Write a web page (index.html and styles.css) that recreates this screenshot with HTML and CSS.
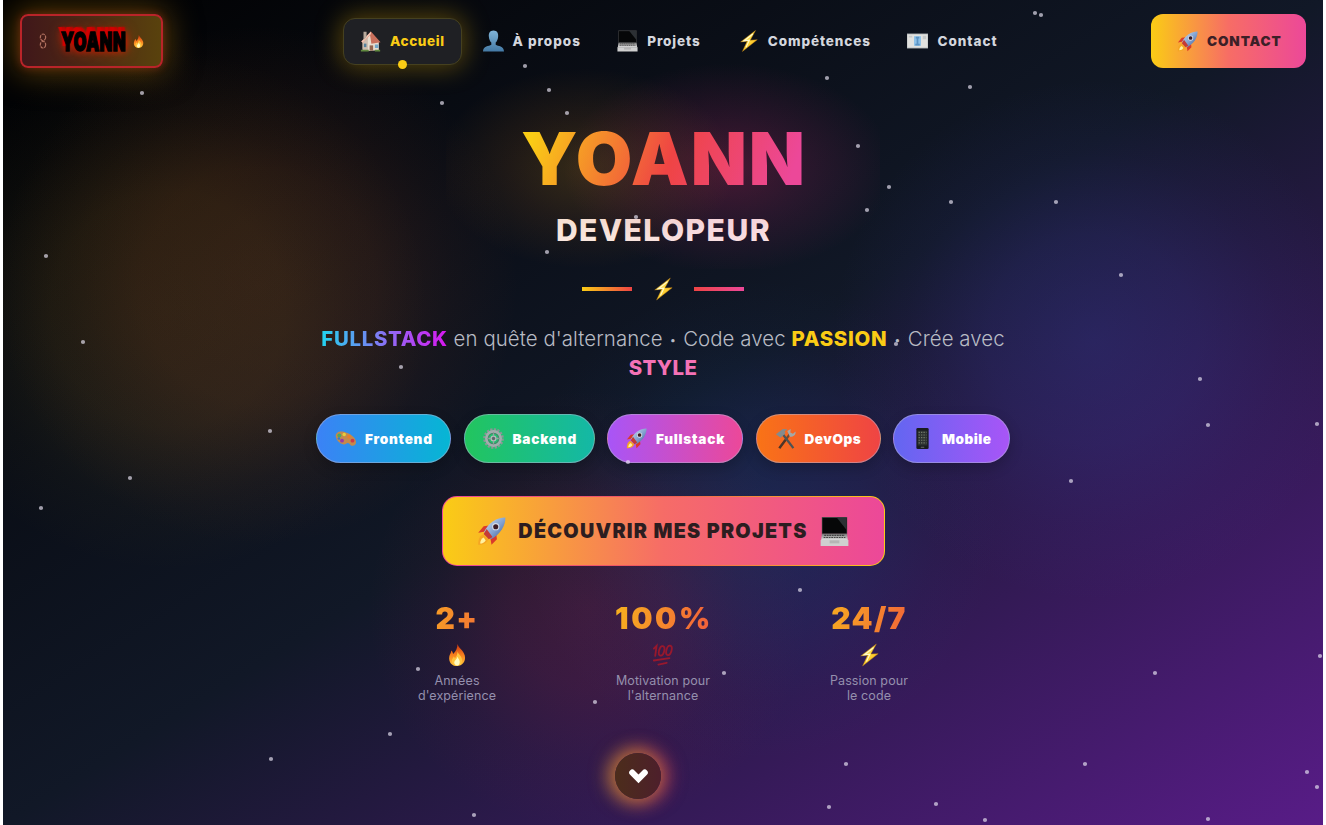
FILE: index.html
```html
<!DOCTYPE html>
<html lang="fr">
<head>
<meta charset="utf-8">
<title>Yoann – Développeur</title>
<link rel="stylesheet" href="styles.css">
</head>
<body>
<svg class="defs" aria-hidden="true">
  <defs>
    <linearGradient id="boltg" x1="0" y1="0" x2="1" y2="1"><stop offset="0" stop-color="#fff6a0"/><stop offset=".5" stop-color="#ffd93b"/><stop offset="1" stop-color="#f5a30a"/></linearGradient>
    <linearGradient id="flameg" x1="0" y1="0" x2="0" y2="1"><stop offset="0" stop-color="#c9300f"/><stop offset=".5" stop-color="#f7801e"/><stop offset="1" stop-color="#ffc83a"/></linearGradient>
    <linearGradient id="bust" x1="0" y1="0" x2="0" y2="1"><stop offset="0" stop-color="#80b4d8"/><stop offset="1" stop-color="#447aa6"/></linearGradient>
    <linearGradient id="hull" x1="0" y1="0" x2="1" y2="1"><stop offset="0" stop-color="#d5e4f5"/><stop offset=".55" stop-color="#7f9fce"/><stop offset="1" stop-color="#3c5487"/></linearGradient>
    <linearGradient id="key" x1="0" y1="0" x2="0" y2="1"><stop offset="0" stop-color="#777"/><stop offset="1" stop-color="#dedede"/></linearGradient>
    <symbol id="rocket" viewBox="0 0 24 24">
      <path d="M10 7 5.500 7.700 1 13l6-1zM16 14.500l.5 4L12 23l-1-6z" fill="#d93a2b"/>
      <path d="M5 14.500C1.500 16 1 19.500 1 23c3.500 0 7-.8 8.500-4.500z" fill="#f5a623"/>
      <path d="M5.500 17C3.500 18 2.700 20 2.600 22c2 0 3.600-1 4.600-2.600z" fill="#fff1a0"/>
      <path d="M23.500.5C17 .3 9.500 4.500 5.800 12.500l5.600 6C19.500 14.500 23.700 7 23.500.5z" fill="url(#hull)"/>
      <path d="M8 10 5.500 14l4.300 4.500 3-2z" fill="#c53a36"/>
      <circle cx="15.500" cy="8" r="3" fill="#d8dde8"/><circle cx="15.500" cy="8" r="2.100" fill="#3c1c25"/>
    </symbol>
    <symbol id="laptop" viewBox="0 0 24 24">
      <path d="M1.500 0h21v14h-21z" fill="#4c4c4c"/><path d="M2 .7h20v12.800H2z" fill="#060708"/>
      <path d="M14 .7h8v10z" fill="#2c3034"/>
      <path d="M1.500 14h21l.5 5H1z" fill="url(#key)"/><path d="M3.500 15.200h17M3 17h18" stroke="#444" stroke-width=".9" stroke-dasharray="1.500 .6"/>
      <path d="M.5 19h23v5H.5z" fill="#cfcfcf"/><path d="M8 19.300h8v2.500H8z" fill="#b5b5b5"/>
    </symbol>
    <symbol id="bolt" viewBox="0 0 24 24"><path d="M20 0 3 13l7.500-.7L5 24l17-13.500-8 .5z" fill="url(#boltg)" stroke="#b97a10" stroke-width=".5"/><path d="M17 4 7 11.700l6-.6-3.800 8" fill="none" stroke="#fffbd0" stroke-width="1.200"/></symbol>
    <symbol id="fire" viewBox="0 0 24 24">
      <path d="M12.500 0c1 4 6.500 7 8 12.500C22 19 17.500 24 12 24S2.500 19.500 3.600 13.500C4 11 5.500 10 5.800 7c1.200 1 1.800 2.500 2 4C11 8 12.500 4 12.500 0z" fill="url(#flameg)"/>
      <path d="M12.500 8c.5 3 4.500 5 5 9 .4 4-2.500 6.500-5.500 6.500S6 21 6.500 17.500c.3-2 1.500-2.500 2-4 .7.700 1 1.500 1.200 2.300C11.500 14 12.700 11 12.500 8z" fill="#ffc540"/>
      <path d="M12.500 14c.5 2 2.500 3 2.500 5.500S13.500 23.500 12 23.500 8.800 22 9 20s3-3 3.500-6z" fill="#fffbc0"/>
    </symbol>
    <symbol id="house" viewBox="0 0 24 24">
      <path d="M3 12 12 3l9.500 10v9.500L9 23.500 3 22z" fill="#e8ddcf"/><path d="M3 12v10l6 1.500V8z" fill="#cdbcae"/>
      <path d="M12.500 1 1.500 12.500 3 14l8.500-8.500L13 15l10.500-1.500z" fill="#c9705c"/><path d="M12.500 1 1.500 12.500 3 14 12.500 4z" fill="#f3c7b5"/>
      <path d="M4 1.500h3.500v6L4 11z" fill="#b9a99c"/><path d="M11 17h4v6h-4z" fill="#94654f"/><path d="M17 16h4v4h-4z" fill="#72a7c8"/>
      <path d="M4.500 15h2.800v4H4.500z" fill="#55819c"/><path d="M1 22h9v2H1zM17 22h6v2h-6z" fill="#61893f"/>
    </symbol>
    <symbol id="person" viewBox="0 0 24 24"><path d="M12 0C7.800 0 6.300 3.200 6.700 7c.3 3.200 1.500 5.500 2.800 6.800v2.400C7 18 0 17.500 0 24h24c0-6.500-7-6-9.500-7.800v-2.400C15.800 12.500 17 10.200 17.300 7 17.700 3.200 16.200 0 12 0z" fill="url(#bust)"/></symbol>
    <symbol id="mail" viewBox="0 0 24 24"><path d="M0 4h24v16H0z" fill="#e2e2df"/><path d="M0 4h24v16H0z" fill="none" stroke="#b4b8bb"/><path d="M8 6.500h8v11H8z" fill="#8fc2e8"/><path d="M10 7h4v2h-1v6h1.500v2h-5v-2H11V9h-1z" fill="#5b93c4"/><path d="M2 6h4v2H2zM18 6h4v4h-4z" fill="#c6c9ca"/></symbol>
    <symbol id="palette" viewBox="0 0 24 24"><path d="M1 10C0 5.500 5 3 11 4.500S24 11 24 16c0 3.500-2.500 5-5 4.200-2-.7-2-3-4.200-3.200-2 0-2.800 2.500-5.800 1.500C5 17.500 1.800 14 1 10z" fill="#c48a4c"/><circle cx="5" cy="8.500" r="2.300" fill="#4ca960"/><circle cx="10.500" cy="7.500" r="2" fill="#e7cf38"/><circle cx="16" cy="10" r="2.100" fill="#e87d2c"/><circle cx="20" cy="14.500" r="2.200" fill="#ce3a49"/><circle cx="8" cy="14.500" r="2.200" fill="#9739a8"/><circle cx="4.500" cy="12" r="1.500" fill="#3979ca"/></symbol>
    <symbol id="gear" viewBox="0 0 24 24"><circle cx="12" cy="12" r="10.300" fill="none" stroke="#8d9597" stroke-width="3" stroke-dasharray="2.500 1.550"/><circle cx="12" cy="12" r="8.200" fill="none" stroke="#a4abad" stroke-width="3"/><circle cx="12" cy="12" r="5.900" fill="none" stroke="#5d686a" stroke-width="1"/><circle cx="12" cy="12" r="2.700" fill="#5d686a" stroke="#b5bcbd" stroke-width="1.500"/><path d="M12 6v3.500M12 14.500V18M6 12h3.500M14.500 12H18" stroke="#99a2a3" stroke-width="1.500"/></symbol>
    <symbol id="tools" viewBox="0 0 24 24"><path d="M5 23 17 7" stroke="#70492f" stroke-width="2.600"/><path d="M5 23 12 13.500" stroke="#4e3527" stroke-width="2.600"/><path d="m8 6 13 17" stroke="#4d5355" stroke-width="2.600"/><path d="M1 7 9 1l5 .5L11 4l1 2-5.500 5z" fill="#858b8c"/><path d="M14 3.500 18 1l-.5 4 3 1.500L23.500 4c.6 4.500-3 6.500-6.500 6z" fill="#a2a8a9"/></symbol>
    <symbol id="phone" viewBox="0 0 24 24"><rect x="5" y="0" width="14" height="24" rx="1.500" fill="#191c20"/><path d="M6.500 3h11v17h-11z" fill="#2d3231"/><path d="M7.500 5h9M7.500 8h9M7.500 11h9M7.500 14h9M7.500 17h9" stroke="#747c6c" stroke-width="1.400" stroke-dasharray="1.500 1.300"/><path d="M10 22h4" stroke="#777"/></symbol>
    <symbol id="hundred" viewBox="0 0 24 24"><g fill="none" stroke="#98182d" stroke-width="2" stroke-linecap="round"><path d="M2 5 5 2 3.500 13"/><ellipse cx="10.500" cy="7.500" rx="2.800" ry="5.300" transform="rotate(15 10.500 7.500)"/><ellipse cx="18.500" cy="7" rx="2.800" ry="5.300" transform="rotate(15 18.500 7)"/><path d="m2 18 17-2.500M7 22.500l9-2"/></g></symbol>
    <symbol id="chain" viewBox="0 0 12 24"><g fill="none" stroke="#b0705f" stroke-width="1.800"><ellipse cx="6" cy="6.500" rx="4" ry="5" stroke-dasharray="5 1.200"/><ellipse cx="6" cy="17.500" rx="4" ry="5" stroke-dasharray="5 1.200"/></g></symbol>
  </defs>
</svg>

<div class="page">
  <header class="header">
    <a class="logo"><svg class="logo-chain"><use href="#chain"/></svg><span class="logo-text">YOANN</span><svg class="logo-fire"><use href="#fire"/></svg></a>
    <nav class="nav">
      <a class="link link-active"><svg><use href="#house"/></svg><span>Accueil</span></a>
      <a class="link link-about"><svg><use href="#person"/></svg><span>À propos</span></a>
      <a class="link link-projects"><svg><use href="#laptop"/></svg><span>Projets</span></a>
      <a class="link link-skills"><svg><use href="#bolt"/></svg><span>Compétences</span></a>
      <a class="link link-contact"><svg><use href="#mail"/></svg><span>Contact</span></a>
    </nav>
    <a class="cta-small"><svg><use href="#rocket"/></svg><span>CONTACT</span></a>
  </header>

  <main class="hero">
    <div class="title-wrap"><h1 class="title">YOANN</h1></div>
    <h2 class="subtitle">DEVELOPEUR</h2>
    <div class="divider"><i class="bar bar-warm"></i><svg><use href="#bolt"/></svg><i class="bar bar-pink"></i></div>
    <p class="tagline"><b class="full">FULLSTACK</b> en quête d'alternance <i>•</i> Code avec <b class="passion">PASSION</b> <i>•</i> Crée avec<br><b class="style">STYLE</b></p>
    <div class="pills">
      <span class="pill frontend"><svg><use href="#palette"/></svg><span>Frontend</span></span>
      <span class="pill backend"><svg><use href="#gear"/></svg><span>Backend</span></span>
      <span class="pill fullstack"><svg><use href="#rocket"/></svg><span>Fullstack</span></span>
      <span class="pill devops"><svg><use href="#tools"/></svg><span>DevOps</span></span>
      <span class="pill mobile"><svg><use href="#phone"/></svg><span>Mobile</span></span>
    </div>
    <a class="cta"><svg><use href="#rocket"/></svg><span>DÉCOUVRIR MES PROJETS</span><svg><use href="#laptop"/></svg></a>
    <div class="stats">
      <div class="stat"><strong>2+</strong><svg><use href="#fire"/></svg><p>Années<br>d'expérience</p></div>
      <div class="stat"><strong class="wide">100%</strong><svg><use href="#hundred"/></svg><p>Motivation pour<br>l'alternance</p></div>
      <div class="stat"><strong>24/7</strong><svg><use href="#bolt"/></svg><p>Passion pour<br>le code</p></div>
    </div>
    <a class="scroll"><svg viewBox="0 0 22 16"><path d="M4.500 4.500 11 11l6.500-6.500" fill="none" stroke="#fff" stroke-width="6.500" stroke-linecap="round"/></svg></a>
  </main>
  <svg class="stars" viewBox="0 0 1320 825"><path d="M1032 13h0M1038 15h0M139 93h0M439 103h0M522 66h0M546 90h0M564 113h0M824 78h0M967 87h0M855 146h0M886 187h0M948 202h0M1053 202h0M864 210h0M544 252h0M633 217h0M43 256h0M80 342h0M398 367h0M893 344h0M1118 275h0M1197 379h0M1205 425h0M1314 424h0M267 431h0M127 478h0M38 508h0M625 462h0M1068 481h0M797 590h0M415 669h0M721 673h0M592 702h0M387 734h0M268 759h0M843 764h0M1082 764h0M1152 673h0M1317 656h0M1304 772h0M1314 787h0M826 807h0M933 804h0M982 820h0M1205 819h0M471 815h0"/></svg>
</div>
</body>
</html>
```
FILE: styles.css
```css
* { box-sizing: border-box; }
body { margin: 0; background: #fff; font-family: Inter, "Liberation Sans", sans-serif; overflow: hidden; }
svg { display: block; flex: none; }
h1, h2, p { margin: 0; }
.defs { position: absolute; width: 0; height: 0; }
.page {
  position: relative; width: 1320px; height: 825px; margin: 0 3px; overflow: hidden;
  background:
    radial-gradient(circle 260px at 255px 285px, rgba(170,75,30,.18) 0, rgba(170,75,30,.15) 45%, rgba(170,75,30,.06) 74%, transparent 100%),
    radial-gradient(circle 260px at 165px 310px, rgba(150,125,25,.14) 0, rgba(150,125,25,.12) 45%, rgba(150,125,25,.04) 75%, transparent 100%),
    radial-gradient(circle 260px at 1090px 340px, rgba(65,70,190,.26) 0, rgba(65,65,180,.2) 40%, rgba(70,60,180,.07) 72%, transparent 100%),
    radial-gradient(circle 220px at 585px 610px, rgba(180,35,75,.21) 0, rgba(180,35,75,.16) 35%, rgba(180,35,75,.05) 70%, transparent 100%),
    radial-gradient(circle 240px at 755px 520px, rgba(25,90,170,.22) 0, rgba(25,80,160,.14) 45%, rgba(25,80,160,.04) 75%, transparent 100%),
    linear-gradient(to bottom right, #000, #111827 50%, #581c87);
}
.stars { position: absolute; inset: 0; width: 1320px; height: 825px; fill: none; stroke: rgba(230,226,240,.68); stroke-width: 4.200; stroke-linecap: round; pointer-events: none; }

.header { height: 82px; padding: 0 17px; display: grid; grid-template-columns: 323px 1fr 155px; align-items: center; }
.logo { width: 143px; height: 54px; display: flex; align-items: center; justify-content: center; border: 2px solid #b92429; border-radius: 8px;
  background: linear-gradient(90deg, #40171a, #4f2c13 55%, #59420d); box-shadow: 0 0 32px 5px rgba(170,115,10,.5), 0 0 9px rgba(200,30,30,.4); }
.logo-chain { width: 8px; height: 16px; margin-right: 14px; }
.logo-text { width: 64px; font-size: 26px; line-height: 30px; font-weight: 900; letter-spacing: .6px; color: #000; transform: translateY(1px) scaleX(.64); transform-origin: left;
  margin-right: 7px; text-shadow: -5px -5px 1px #d40000, 0 -5px 2px #c00, 0 0 8px #e00, 0 0 16px #e33a00; -webkit-text-stroke: 1.500px #000; }
.logo-fire { width: 13px; height: 15px; }
.nav { display: flex; gap: 3.600px; }
.link { height: 47px; display: flex; align-items: center; gap: 9px; padding-left: 16px; border: 1px solid transparent; border-radius: 12px; color: #d4d6dd; font-size: 13.500px; font-weight: 800; letter-spacing: .9px; white-space: nowrap; }
.link svg { width: 21px; height: 22px; }
.link-active { position: relative; width: 119px; letter-spacing: .6px; color: #facc15; background: #1f2024; border-color: #45401f; box-shadow: 0 0 26px 2px rgba(230,175,10,.38); }
.link-active::after { content: ""; position: absolute; left: 54px; top: 41px; width: 9px; height: 9px; border-radius: 50%; background: #facc15; }
.link-about { width: 131px; }
.link-about, .link-contact { letter-spacing: 1px; }
.link-projects { width: 117px; }
.link-skills { width: 166px; }
.link-contact { width: 124px; }
.cta-small { height: 54px; display: flex; align-items: center; padding-left: 26px; gap: 9px; border-radius: 12px; background: linear-gradient(90deg, #facc15, #f76d65 50%, #ec4899); color: #3c2027; font-size: 13.500px; font-weight: 900; letter-spacing: .9px; }
.cta-small svg { width: 21px; height: 21px; }

.hero { display: flex; flex-direction: column; align-items: center; padding-top: 32px; }
.title-wrap { height: 90px; position: relative; isolation: isolate; }
.title-wrap::before { content: ""; position: absolute; z-index: -1; inset: -55px -75px -65px; background: radial-gradient(ellipse 150px 100px at 32% 52%, rgba(175,120,20,.26), rgba(175,100,20,.13) 50%, transparent), radial-gradient(ellipse 165px 105px at 65% 52%, rgba(200,40,100,.3), rgba(190,40,110,.15) 50%, transparent); }
.title { font-size: 73px; line-height: 90px; font-weight: 900; letter-spacing: 1.900px; margin-right: -2px; color: transparent; background: linear-gradient(110deg, #facc15 6%, #ef4444 52%, #ec4899 92%); -webkit-background-clip: text; background-clip: text; }
.subtitle { margin: 6px -1px 0 0; height: 40px; font-size: 30px; line-height: 40px; font-weight: 800; letter-spacing: 1.500px; color: #fff1ed; }
.divider { height: 28px; margin-top: 25px; display: flex; align-items: center; gap: 20px; }
.divider svg { width: 22px; height: 28px; }
.bar { width: 50px; height: 4px; }
.bar-warm { background: linear-gradient(90deg, #facc15, #ef4444); }
.bar-pink { background: linear-gradient(90deg, #ef4444, #ec4899); }
.tagline { margin-top: 21px; height: 58px; font-size: 20.400px; line-height: 29px; font-weight: 300; letter-spacing: .08px; color: #b8bbc4; text-align: center; white-space: nowrap; }
.tagline b { font-weight: 800; letter-spacing: .7px; }
.tagline i { font-style: normal; font-size: 12px; line-height: 1; vertical-align: 2px; padding: 0 1px; }
.full { color: transparent; background: linear-gradient(90deg, #22d3ee, #9763f5 58%, #d916ef); -webkit-background-clip: text; background-clip: text; }
.tagline .passion { color: #facc15; }
.tagline .style { color: #f472b6; letter-spacing: .4px; }
.pills { margin-top: 32px; display: flex; gap: 12.500px; }
.pill { height: 49px; display: flex; align-items: center; gap: 9px; padding-left: 18px; border: 1px solid rgba(180,180,210,.5); border-radius: 25px; color: #fff; font-size: 13.600px; font-weight: 900; letter-spacing: .75px; box-shadow: 0 5px 14px rgba(0,0,0,.2); }
.pill svg { width: 21px; height: 21px; }
.frontend { width: 135px; background: linear-gradient(90deg, #3b82f6, #06b6d4); }
.backend { width: 131px; background: linear-gradient(90deg, #22c55e, #14b8a6); }
.fullstack { width: 136px; background: linear-gradient(90deg, #a855f7, #ec4899); }
.devops { width: 125px; letter-spacing: .5px; background: linear-gradient(90deg, #f97316, #ef4444); }
.mobile { width: 117px; letter-spacing: .5px; background: linear-gradient(90deg, #6366f1, #a855f7); }
.cta { margin-top: 33px; width: 443px; height: 70px; display: flex; align-items: center; justify-content: center; gap: 12.500px; border: 1px solid transparent; border-radius: 15px;
  background: linear-gradient(90deg, #facc15, #f66c67 50%, #ec4899) padding-box, linear-gradient(90deg, #ec4899, #f05a55 50%, #facc15) border-box; color: #2c1d20; font-size: 19.800px; font-weight: 900; letter-spacing: 1.250px; white-space: nowrap; }
.cta svg { width: 29px; height: 29px; }
.stats { margin-top: 34px; display: grid; grid-template-columns: repeat(3, 206px); }
.stat { display: flex; flex-direction: column; align-items: center; }
.stat strong { width: 158px; text-align: center; font-size: 30px; line-height: 36px; font-weight: 900; letter-spacing: 1.300px; color: transparent; background: linear-gradient(100deg, #facc15, #ef4444); -webkit-background-clip: text; background-clip: text; }
.stat .wide { letter-spacing: 2.600px; text-indent: 2px; }
.stat svg { width: 22px; height: 24px; margin-top: 7px; }
.stat p { margin-top: 6px; font-size: 12.500px; line-height: 15px; text-align: center; color: #9590ad; letter-spacing: .1px; }
.scroll { width: 46px; height: 46px; margin: 50px 50px 0 0; border-radius: 50%; display: flex; align-items: center; justify-content: center; background: linear-gradient(90deg, #4c2d1b, #4d1f2b); box-shadow: -4px 0 18px 4px rgba(215,155,40,.6), 4px 0 18px 4px rgba(225,60,90,.55); }
.scroll svg { width: 21px; height: 16px; }
```
